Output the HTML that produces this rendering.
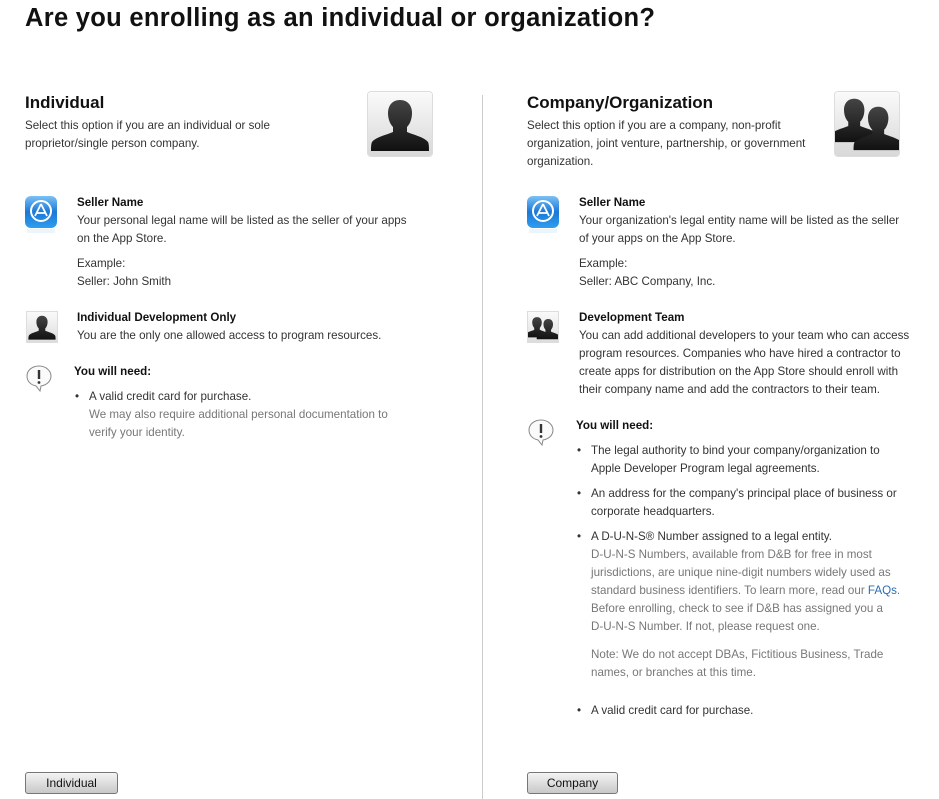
<!DOCTYPE html>
<html><head><meta charset="utf-8"><style>
body{margin:0;width:939px;height:799px;background:#fff;font-family:"Liberation Sans",sans-serif;color:#333;position:relative;overflow:hidden}
.a{position:absolute;white-space:nowrap}
.t{font-size:11.6px;line-height:18px}
.g{color:#777}
.b{font-weight:bold;color:#111}
h1{position:absolute;left:25px;top:0;margin:0;font-size:25.5px;line-height:36px;font-weight:bold;color:#111;letter-spacing:0.3px}
h2{position:absolute;margin:0;font-size:17px;line-height:20px;font-weight:bold;color:#111}
.btn{position:absolute;top:772px;height:20px;border:1px solid #777;border-radius:3px;background:linear-gradient(#f4f4f4,#c8c8c8);font-size:12px;line-height:20px;text-align:center;color:#111}
.div{position:absolute;left:482px;top:95px;width:1px;height:704px;background:#ccc}
.av{position:absolute;width:64px;height:64px;border-radius:3px;background:linear-gradient(#fafafa,#d8d8d8);box-shadow:0 0 0 1px #ddd;overflow:hidden}
</style></head><body>
<h1>Are you enrolling as an individual or organization?</h1>
<div class="div"></div>

<svg width="0" height="0" style="position:absolute"><defs>
<linearGradient id="pg" x1="0" y1="0" x2="0" y2="1"><stop offset="0" stop-color="#444"/><stop offset="1" stop-color="#111"/></linearGradient>
<g id="person"><path d="M32 8c-8 0-12 6-12 13 0 6 2 11 5 14v5c-7 3-17 5-21 10-1 2-1 6-1 9h58c0-3 0-7-1-9-4-5-14-7-21-10v-5c3-3 5-8 5-14 0-7-4-13-12-13z" fill="url(#pg)"/></g>
<linearGradient id="ab" x1="0" y1="0" x2="0" y2="1"><stop offset="0" stop-color="#7cc1f5"/><stop offset=".5" stop-color="#1a78d6"/><stop offset="1" stop-color="#2f9ef0"/></linearGradient>
</defs></svg>

<!-- LEFT -->
<h2 style="left:25px;top:93px">Individual</h2>
<div class="a t" style="left:25px;top:117px">Select this option if you are an individual or sole<br>proprietor/single person company.</div>
<div class="av" style="left:368px;top:92px"><svg width="64" height="64" viewBox="0 0 64 64"><use href="#person"/></svg></div>

<svg class="a" style="left:25px;top:196px" width="32" height="38" viewBox="0 0 32 38"><rect x="0" y="0" width="32" height="32" rx="6" fill="url(#ab)"/><circle cx="16" cy="15" r="10" fill="none" stroke="#fff" stroke-width="2"/><path d="M16 8l-6 12M16 8l6 12M11 17h10" stroke="#fff" stroke-width="1.8" fill="none"/><rect x="2" y="33" width="28" height="4" fill="#dceefa" opacity=".6"/></svg>
<div class="a t" style="left:77px;top:194px"><span class="b">Seller Name</span><br>Your personal legal name will be listed as the seller of your apps<br>on the App Store.</div>
<div class="a t" style="left:77px;top:255px">Example:<br>Seller: John Smith</div>

<svg class="a" style="left:26px;top:311px;border:1px solid #ddd;background:linear-gradient(#fafafa,#ddd)" width="30" height="30" viewBox="0 0 64 64"><use href="#person"/></svg>
<div class="a t" style="left:77px;top:309px"><span class="b">Individual Development Only</span><br>You are the only one allowed access to program resources.</div>

<svg class="a" style="left:25px;top:364px" width="28" height="28" viewBox="0 0 28 28"><path d="M14 2C7 2 2 6.5 2 12s4 9 9 10l4 5 1-5c6-1 10-5 10-10S21 2 14 2z" fill="#fafafa" stroke="#888"/><path d="M14 6v9" stroke="#333" stroke-width="2.4"/><circle cx="14" cy="18.5" r="1.4" fill="#333"/></svg>
<div class="a t b" style="left:74px;top:363px">You will need:</div>
<div class="a t" style="left:75px;top:388px">•</div>
<div class="a t" style="left:89px;top:388px">A valid credit card for purchase.<br><span class="g">We may also require additional personal documentation to<br>verify your identity.</span></div>

<div class="btn" style="left:25px;width:91px">Individual</div>

<!-- RIGHT -->
<h2 style="left:527px;top:93px">Company/Organization</h2>
<div class="a t" style="left:527px;top:117px">Select this option if you are a company, non-profit<br>organization, joint venture, partnership, or government<br>organization.</div>
<div class="av" style="left:835px;top:92px"><svg width="64" height="64" viewBox="0 0 64 64"><g transform="translate(-8,0) scale(0.85)"><use href="#person"/></g><g transform="translate(16,8) scale(0.85)"><use href="#person"/></g></svg></div>

<svg class="a" style="left:527px;top:196px" width="32" height="38" viewBox="0 0 32 38"><rect x="0" y="0" width="32" height="32" rx="6" fill="url(#ab)"/><circle cx="16" cy="15" r="10" fill="none" stroke="#fff" stroke-width="2"/><path d="M16 8l-6 12M16 8l6 12M11 17h10" stroke="#fff" stroke-width="1.8" fill="none"/><rect x="2" y="33" width="28" height="4" fill="#dceefa" opacity=".6"/></svg>
<div class="a t" style="left:579px;top:194px"><span class="b">Seller Name</span><br>Your organization's legal entity name will be listed as the seller<br>of your apps on the App Store.</div>
<div class="a t" style="left:579px;top:255px">Example:<br>Seller: ABC Company, Inc.</div>

<svg class="a" style="left:527px;top:311px;border:1px solid #ddd;background:linear-gradient(#fafafa,#ddd)" width="30" height="30" viewBox="0 0 64 64"><g transform="translate(-8,4) scale(0.85)"><use href="#person"/></g><g transform="translate(16,8) scale(0.85)"><use href="#person"/></g></svg>
<div class="a t" style="left:579px;top:309px"><span class="b">Development Team</span><br>You can add additional developers to your team who can access<br>program resources. Companies who have hired a contractor to<br>create apps for distribution on the App Store should enroll with<br>their company name and add the contractors to their team.</div>

<svg class="a" style="left:527px;top:418px" width="28" height="28" viewBox="0 0 28 28"><path d="M14 2C7 2 2 6.5 2 12s4 9 9 10l4 5 1-5c6-1 10-5 10-10S21 2 14 2z" fill="#fafafa" stroke="#888"/><path d="M14 6v9" stroke="#333" stroke-width="2.4"/><circle cx="14" cy="18.5" r="1.4" fill="#333"/></svg>
<div class="a t b" style="left:576px;top:417px">You will need:</div>
<div class="a t" style="left:577px;top:442px">•</div>
<div class="a t" style="left:591px;top:442px">The legal authority to bind your company/organization to<br>Apple Developer Program legal agreements.</div>
<div class="a t" style="left:577px;top:485px">•</div>
<div class="a t" style="left:591px;top:485px">An address for the company's principal place of business or<br>corporate headquarters.</div>
<div class="a t" style="left:577px;top:528px">•</div>
<div class="a t" style="left:591px;top:528px">A D-U-N-S® Number assigned to a legal entity.<br><span class="g">D-U-N-S Numbers, available from D&amp;B for free in most<br>jurisdictions, are unique nine-digit numbers widely used as<br>standard business identifiers. To learn more, read our <span style="color:#2a6db5">FAQs</span>.<br>Before enrolling, check to see if D&amp;B has assigned you a<br>D-U-N-S Number. If not, please request one.</span></div>
<div class="a t g" style="left:591px;top:646px">Note: We do not accept DBAs, Fictitious Business, Trade<br>names, or branches at this time.</div>
<div class="a t" style="left:577px;top:702px">•</div>
<div class="a t" style="left:591px;top:702px">A valid credit card for purchase.</div>

<div class="btn" style="left:527px;width:89px">Company</div>
</body></html>
